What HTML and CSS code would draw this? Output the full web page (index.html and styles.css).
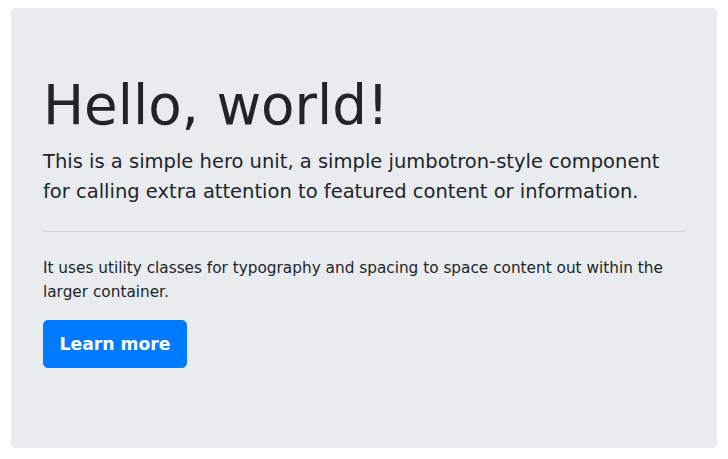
FILE: index.html
```html
<!DOCTYPE html>
<html lang="en">
<head>
<meta charset="utf-8">
<title>Jumbotron</title>
<link rel="stylesheet" href="styles.css">
</head>
<body>
<div class="jumbotron">
  <h1 class="display">Hello, world!</h1>
  <p class="lead">This is a simple hero unit, a simple jumbotron-style component for calling extra attention to featured content or information.</p>
  <hr class="divider">
  <p class="body-text">It uses utility classes for typography and spacing to space content out within the larger container.</p>
  <p class="lead action"><a class="btn" href="#">Learn more</a></p>
</div>
</body>
</html>
```

FILE: styles.css
```css
html, body {
  margin: 0;
  padding: 0;
  background: #fff;
}
body {
  padding: 8px 11px;
  font-family: "DejaVu Sans", "Liberation Sans", sans-serif;
  color: #212529;
  font-size: 16px;
  line-height: 1.5;
}
.jumbotron {
  background: #e9ecef;
  border-radius: 4.8px;
  padding: 64px 32px;
}
.display {
  margin: 0 0 8px;
  font-size: 54.7px;
  font-weight: 400;
  line-height: 67px;
}
.lead {
  margin: 0 0 16px;
  font-size: 19.5px;
  line-height: 30px;
}
.divider {
  margin: 24px 0;
  border: 0;
  border-top: 1px solid rgba(0, 0, 0, 0.1);
  height: 0;
}
.body-text {
  margin: 0 0 16px;
  font-size: 15.3px;
  line-height: 24px;
}
.action {
  margin: 0 0 16px;
  line-height: 30px;
}
.btn {
  display: inline-block;
  box-sizing: border-box;
  width: 144px;
  height: 48px;
  text-align: center;
  background: #007bff;
  color: #fff;
  text-decoration: none;
  padding: 8px 0;
  border-radius: 4.8px;
  border: 1px solid #007bff;
  font-size: 17.2px;
  font-weight: 700;
  line-height: 30px;
  vertical-align: middle;
}
```
